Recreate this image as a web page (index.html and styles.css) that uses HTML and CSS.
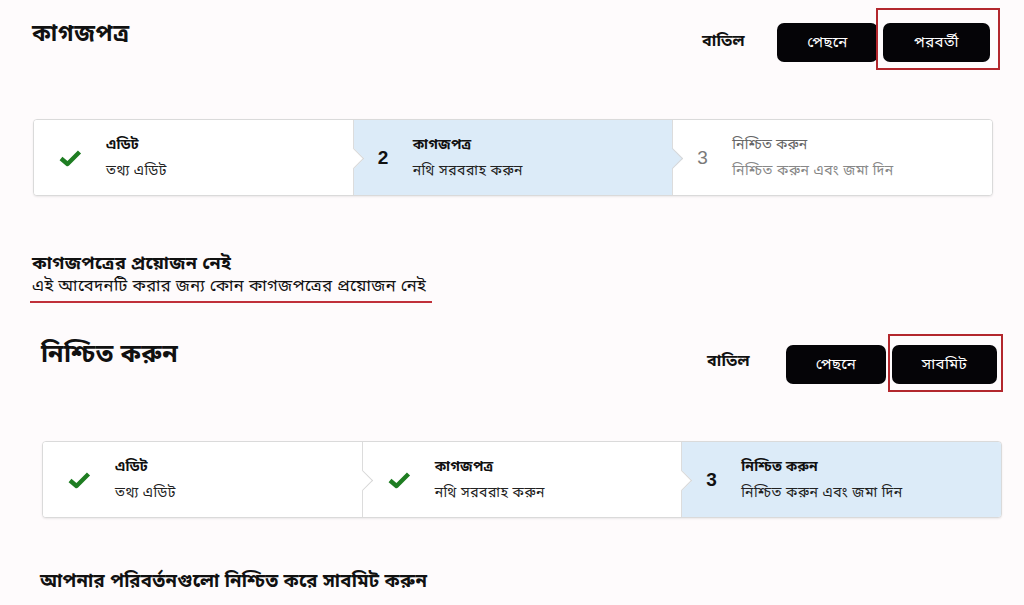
FILE: index.html
```html
<!DOCTYPE html>
<html lang="bn">
<head>
<meta charset="utf-8">
<title>কাগজপত্র</title>
<link rel="stylesheet" href="styles.css">
</head>
<body>
<section class="screen screen-one">
  <div class="head">
    <h1 class="title">কাগজপত্র</h1>
    <div class="actions">
      <span class="cancel">বাতিল</span>
      <button class="btn btn-back">পেছনে</button>
      <div class="mark mark-next"><button class="btn btn-next">পরবর্তী</button></div>
    </div>
  </div>
  <div class="stepper">
    <div class="step done">
      <svg class="check" viewBox="0 0 24 18" width="24" height="18"><path d="M3 9.5 L9.5 15 L21.5 3" fill="none" stroke="#1e7d22" stroke-width="4.4" stroke-linejoin="round"/></svg>
      <div class="texts"><div class="st-title">এডিট</div><div class="st-sub">তথ্য এডিট</div></div>
    </div>
    <div class="step active">
      <span class="num">2</span>
      <div class="texts"><div class="st-title">কাগজপত্র</div><div class="st-sub">নথি সরবরাহ করুন</div></div>
    </div>
    <div class="step todo last">
      <span class="num">3</span>
      <div class="texts"><div class="st-title">নিশ্চিত করুন</div><div class="st-sub">নিশ্চিত করুন এবং জমা দিন</div></div>
    </div>
  </div>
  <div class="notice">
    <div class="notice-title">কাগজপত্রের প্রয়োজন নেই</div>
    <div class="notice-sub">এই আবেদনটি করার জন্য কোন কাগজপত্রের প্রয়োজন নেই</div>
  </div>
</section>
<section class="screen screen-two">
  <div class="head">
    <h1 class="title">নিশ্চিত করুন</h1>
    <div class="actions">
      <span class="cancel">বাতিল</span>
      <button class="btn btn-back">পেছনে</button>
      <div class="mark mark-submit"><button class="btn btn-submit">সাবমিট</button></div>
    </div>
  </div>
  <div class="stepper">
    <div class="step done">
      <svg class="check" viewBox="0 0 24 18" width="24" height="18"><path d="M3 9.5 L9.5 15 L21.5 3" fill="none" stroke="#1e7d22" stroke-width="4.4" stroke-linejoin="round"/></svg>
      <div class="texts"><div class="st-title">এডিট</div><div class="st-sub">তথ্য এডিট</div></div>
    </div>
    <div class="step done">
      <svg class="check" viewBox="0 0 24 18" width="24" height="18"><path d="M3 9.5 L9.5 15 L21.5 3" fill="none" stroke="#1e7d22" stroke-width="4.4" stroke-linejoin="round"/></svg>
      <div class="texts"><div class="st-title">কাগজপত্র</div><div class="st-sub">নথি সরবরাহ করুন</div></div>
    </div>
    <div class="step active last">
      <span class="num">3</span>
      <div class="texts"><div class="st-title">নিশ্চিত করুন</div><div class="st-sub">নিশ্চিত করুন এবং জমা দিন</div></div>
    </div>
  </div>
  <p class="confirm">আপনার পরিবর্তনগুলো নিশ্চিত করে সাবমিট করুন</p>
</section>
</body>
</html>
```
FILE: styles.css
```css
* { box-sizing: border-box; }
html, body { margin: 0; padding: 0; }
body {
  width: 1024px;
  height: 605px;
  overflow: hidden;
  background: #fefbfc;
  color: #111;
  font-family: "Noto Sans Bengali", "Noto Sans", "Liberation Sans", sans-serif;
}
.screen { display: flex; flex-direction: column; align-items: flex-start; }
.screen-one { height: 312px; padding: 8px 0 0 32px; }
.screen-two { height: 293px; padding: 22px 0 0 40px; }

.head { display: flex; justify-content: space-between; align-items: flex-start; }
.screen-one .head { width: 968px; }
.screen-two .head { width: 963px; }

.title { margin: 0; font-weight: 700; color: #111; }
.screen-one .title { font-size: 23px; line-height: 30px; margin-top: 12px; letter-spacing: 0.6px; }
.screen-two .title { font-size: 25px; line-height: 32px; margin-top: 6px; margin-left: 1px; letter-spacing: 0.4px; }

.actions { display: flex; align-items: flex-start; }
.cancel { font-size: 16px; font-weight: 700; line-height: 20px; color: #111; letter-spacing: 0.3px; }
.screen-one .cancel { margin-top: 24px; margin-right: 32px; }
.screen-two .cancel { margin-top: 18px; margin-right: 36px; }

.btn {
  display: flex; align-items: center; justify-content: center;
  height: 39px; border: 0; border-radius: 7px;
  background: #050407; color: #fff;
  font-family: inherit; font-size: 15px; padding: 0; letter-spacing: 0.4px;
}
.btn-back { width: 101px; }
.screen-one .btn-back { margin-top: 15px; }
.screen-two .btn-back { margin-top: 11px; width: 100px; }
.btn-next { width: 107px; }
.btn-submit { width: 105px; }

.mark { border: 2px solid #b3272d; }
.mark-next { padding: 13px 8px 6px 5px; margin-left: -2px; }
.mark-submit { padding: 9px 4px 6px 2px; margin-left: 2px; }

.stepper {
  display: flex; width: 960px; height: 77px;
  background: #fff; border: 1px solid #dadada; border-radius: 4px;
  box-shadow: 0 1px 2px rgba(0,0,0,0.08);
}
.screen-one .stepper { margin: 49px 0 0 1px; }
.screen-two .stepper { margin: 49px 0 0 2px; }

.step {
  position: relative; flex: 1 1 0;
  display: flex; align-items: center; gap: 24px;
  padding-left: 24px; background: #fff;
  border-right: 1px solid #dcdcdc;
}
.step:first-child { border-radius: 3px 0 0 3px; }
.step.last { border-right: 0; border-radius: 0 3px 3px 0; }
.step.active { background: #dcebf8; }
.step::after {
  content: ""; position: absolute; z-index: 2;
  right: -8px; top: 50%;
  width: 14px; height: 14px; margin-top: -7px;
  background: inherit;
  border-top: 1px solid #d6d6d6; border-right: 1px solid #d6d6d6;
  transform: rotate(45deg);
}
.step.last::after { display: none; }

.check { display: block; }
.num { font-family: "Liberation Sans", Arial, sans-serif; font-weight: 700; font-size: 19px; width: 11px; color: #111; }
.texts { display: flex; flex-direction: column; gap: 8px; margin-top: 2px; }
.st-title { font-size: 14px; font-weight: 700; line-height: 18px; color: #111; letter-spacing: 0.2px; }
.st-sub { font-size: 14px; line-height: 18px; color: #222; letter-spacing: 0.5px; }
.step.todo .num { color: #7a7a7a; font-weight: 400; }
.step.todo .st-title { color: #666; font-weight: 400; }
.step.todo .st-sub { color: #888; }

.notice { margin: 56px 0 0 -2px; padding: 0 0 3px 2px; width: 402px; border-bottom: 2px solid #c0303a; }
.notice-title { font-size: 18px; font-weight: 700; line-height: 24px; color: #111; letter-spacing: 0.3px; }
.notice-sub { font-size: 16.5px; line-height: 22px; color: #111; letter-spacing: 0.4px; }

.confirm { margin: 52px 0 0 0; font-size: 18.5px; font-weight: 700; line-height: 26px; color: #111; letter-spacing: 0.3px; }
```
